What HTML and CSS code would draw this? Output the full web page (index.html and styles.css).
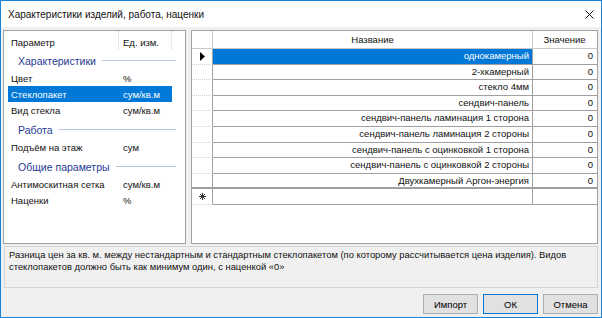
FILE: index.html
```html
<!DOCTYPE html>
<html lang="ru">
<head>
    <meta charset="UTF-8">
    <title>Характеристики изделий, работа, наценки</title>
    <link rel="stylesheet" href="styles.css">
</head>
<body>
    <div class="window">
        <div class="titlebar">
            <span class="title">Характеристики изделий, работа, наценки</span>
            <svg class="close" width="9" height="9" viewBox="0 0 9 9">
                <path d="M0.5 0.5 L8.5 8.5 M8.5 0.5 L0.5 8.5" stroke="#111" stroke-width="1" fill="none"/>
            </svg>
        </div>

        <div class="content">
            <div class="panes">
                <!-- parameters list -->
                <div class="params">
                    <div class="params-head">
                        <span class="col-name">Параметр</span>
                        <span class="col-unit">Ед. изм.</span>
                    </div>

                    <div class="group"><span>Характеристики</span></div>
                    <div class="item"><span>Цвет</span><span>%</span></div>
                    <div class="item selected"><span>Стеклопакет</span><span>сум/кв.м</span></div>
                    <div class="item"><span>Вид стекла</span><span>сум/кв.м</span></div>

                    <div class="group"><span>Работа</span></div>
                    <div class="item"><span>Подъём на этаж</span><span>сум</span></div>

                    <div class="group"><span>Общие параметры</span></div>
                    <div class="item"><span>Антимоскитная сетка</span><span>сум/кв.м</span></div>
                    <div class="item"><span>Наценки</span><span>%</span></div>
                </div>

                <!-- values grid -->
                <div class="grid">
                    <div class="grid-row grid-head">
                        <div class="cell rowhead"></div>
                        <div class="cell center">Название</div>
                        <div class="cell center">Значение</div>
                    </div>
                    <div class="grid-row">
                        <div class="cell rowhead">
                            <svg width="5" height="9" viewBox="0 0 5 9"><path d="M0 0 L5 4.5 L0 9 Z" fill="#000"/></svg>
                        </div>
                        <div class="cell active">однокамерный</div>
                        <div class="cell">0</div>
                    </div>
                    <div class="grid-row"><div class="cell rowhead"></div><div class="cell">2-хкамерный</div><div class="cell">0</div></div>
                    <div class="grid-row"><div class="cell rowhead"></div><div class="cell">стекло 4мм</div><div class="cell">0</div></div>
                    <div class="grid-row"><div class="cell rowhead"></div><div class="cell">сендвич-панель</div><div class="cell">0</div></div>
                    <div class="grid-row"><div class="cell rowhead"></div><div class="cell">сендвич-панель ламинация 1 сторона</div><div class="cell">0</div></div>
                    <div class="grid-row"><div class="cell rowhead"></div><div class="cell">сендвич-панель ламинация 2 стороны</div><div class="cell">0</div></div>
                    <div class="grid-row"><div class="cell rowhead"></div><div class="cell">сендвич-панель с оцинковкой 1 сторона</div><div class="cell">0</div></div>
                    <div class="grid-row"><div class="cell rowhead"></div><div class="cell">сендвич-панель с оцинковкой 2 стороны</div><div class="cell">0</div></div>
                    <div class="grid-row last"><div class="cell rowhead"></div><div class="cell">Двухкамерный Аргон-энергия</div><div class="cell">0</div></div>
                    <div class="grid-row">
                        <div class="cell rowhead">
                            <svg width="7" height="7" viewBox="0 0 7 7">
                                <path d="M3.5 0 V7 M0 3.5 H7 M1 1 L6 6 M6 1 L1 6" stroke="#333" stroke-width="1" fill="none"/>
                            </svg>
                        </div>
                        <div class="cell"></div>
                        <div class="cell"></div>
                    </div>
                </div>
            </div>

            <div class="hint">
                Разница цен за кв. м. между нестандартным и стандартным стеклопакетом (по которому рассчитывается цена изделия). Видов стеклопакетов должно быть как минимум один, с наценкой «0»
            </div>

            <div class="buttons">
                <button class="btn">Импорт</button>
                <button class="btn default">ОК</button>
                <button class="btn">Отмена</button>
            </div>
        </div>
    </div>
</body>
</html>
```

FILE: styles.css
```css
* {
    box-sizing: border-box;
}
body {
    margin: 0;
    font-family: "Liberation Sans", Arial, sans-serif;
    font-size: 9.5px;
    color: #111;
}
.window {
    width: 602px;
    height: 318px;
    border: 1px solid #1883d7;
    background: #f0f0f0;
    display: flex;
    flex-direction: column;
}
.titlebar {
    height: 26px;
    background: #fff;
    display: flex;
    align-items: center;
    justify-content: space-between;
    padding: 0 7px 0 7px;
}
.title {
    font-size: 10px;
    padding-top: 1px;
}
.close {
    margin-right: 0;
    margin-top: 1px;
}
.content {
    padding: 3px 3px 3px 2px;
    display: flex;
    flex-direction: column;
}
.panes {
    display: flex;
    gap: 5px;
    height: 214px;
}
.params {
    width: 183px;
    height: 100%;
    background: #fff;
    border: 1px solid #a0a0a0;
}
.params-head {
    height: 18px;
    display: grid;
    grid-template-columns: 115px 53px;
}
.params-head span {
    padding: 6px 0 0 7px;
    border-right: 1px dotted #d6d6d6;
}
.params-head .col-unit {
    padding-left: 4px;
}
.group {
    height: 21px;
    display: flex;
    align-items: flex-end;
    padding: 0 0 3px 14px;
    margin-right: 9px;
    color: #1f3a93;
    font-size: 10.5px;
}
.group::after {
    content: "";
    flex: 1;
    border-top: 1px solid #b9c6df;
    margin: 0 0 6px 6px;
}
.item {
    height: 16px;
    margin-left: 4px;
    width: 164px;
    display: grid;
    grid-template-columns: 111px 1fr;
    align-items: center;
}
.item span {
    padding-left: 3px;
}
.item span + span {
    padding-left: 4px;
}
.item.selected {
    background: #0078d7;
    color: #fff;
}
.grid {
    width: 407px;
    height: 100%;
    background: #fff;
    border: 1px solid #a0a0a0;
}
.grid-row {
    display: grid;
    grid-template-columns: 21px 320px 64px;
    height: 15.6px;
}
.grid-head {
    height: 18px;
}
.cell {
    border-right: 1px solid #a0a0a0;
    border-bottom: 1px solid #a0a0a0;
    text-align: right;
    padding: 0 3px;
    line-height: 14.6px;
    white-space: nowrap;
    overflow: hidden;
}
.cell:last-child {
    border-right: none;
    padding-right: 4px;
}
.grid-head .cell {
    line-height: 17px;
    border-bottom: 1px solid #c8c8c8;
    border-right: 1px solid #c8c8c8;
}
.grid-head .cell:last-child {
    border-right: none;
}
.center {
    text-align: center !important;
}
.rowhead {
    border-right: 1px solid #a0a0a0;
    border-bottom: 1px dotted #d0d0d0;
    display: flex;
    align-items: center;
    justify-content: center;
}
.active {
    background: #0078d7;
    color: #fff;
}
.grid-row.last .cell {
    border-bottom: 2px solid #a0a0a0;
}
.hint {
    margin-top: 2px;
    height: 42px;
    margin-left: 1px;
    border: 1px solid #d4d4d4;
    padding: 2px 4px;
    line-height: 12px;
    font-size: 9.4px;
}
.buttons {
    margin-top: 6px;
    display: flex;
    justify-content: flex-end;
    gap: 5px;
}
.btn {
    width: 55px;
    height: 20px;
    background: #e1e1e1;
    border: 1px solid #adadad;
    font-family: "Liberation Sans", Arial, sans-serif;
    font-size: 9.5px;
    color: #000;
    padding: 0;
}
.btn.default {
    border: 1px solid #0078d7;
}
```
